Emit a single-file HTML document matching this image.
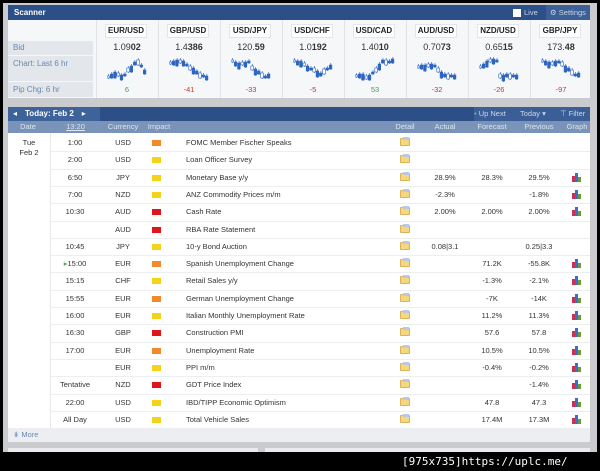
<!DOCTYPE html>
<html><head><meta charset="utf-8"><style>
*{margin:0;padding:0;box-sizing:border-box}
body{width:600px;height:471px;background:#000;font-family:"Liberation Sans","DejaVu Sans",sans-serif;font-size:8px;color:#333;position:relative;overflow:hidden}
.bg{position:absolute;left:3px;top:3px;width:594px;height:449px;background:#c9cbce}
.abs{position:absolute}
.panel{position:absolute;background:#f4f6f9}
.hdr{position:absolute;background:#2b4f86;color:#fff;font-weight:bold}
.c{text-align:center}
</style></head><body>
<div class="bg"></div>
<!-- scanner -->
<div class="panel" style="left:8px;top:5px;width:582px;height:93px;background:#f6f7f9"></div>
<div class="hdr" style="left:8px;top:5px;width:582px;height:15px;font-size:8px;line-height:15px;padding-left:6px">Scanner</div>
<div class="abs" style="left:513px;top:9px;width:8px;height:8px;background:#fff"></div>
<div class="abs" style="left:524px;top:5px;color:#c9d6ea;line-height:15px;font-size:7.5px">Live</div>
<div class="abs" style="left:546px;top:5px;width:44px;height:15px;background:#3c5f95"></div>
<div class="abs" style="left:550px;top:5px;color:#c9d6ea;line-height:15px;font-size:7.5px">⚙ Settings</div>
<div class="abs" style="left:8px;top:20px;width:85px;height:78px;background:#f6f7f9"></div>
<div class="abs" style="left:8px;top:41px;width:85px;height:14px;background:#e3e6ea;color:#6a88b0;line-height:14px;padding-left:5px">Bid</div>
<div class="abs" style="left:8px;top:56px;width:85px;height:25px;background:#e3e6ea;color:#6a88b0;padding:3px 5px">Chart: Last 6 hr</div>
<div class="abs" style="left:8px;top:82px;width:85px;height:15px;background:#e3e6ea;color:#6a88b0;line-height:15px;padding-left:5px">Pip Chg: 6 hr</div>
<div id="scan"></div>
<!-- calendar -->
<div class="panel" style="left:8px;top:107px;width:582px;height:335px;background:#fff"></div>
<div class="hdr" style="left:8px;top:107px;width:582px;height:14px"></div>
<div class="abs" style="left:8px;top:107px;width:92px;height:14px;background:#3e639b;color:#fff;font-weight:bold;line-height:14px;font-size:8px"><span style="margin-left:5px">◂</span><span style="margin-left:8px">Today: Feb 2</span><span style="margin-left:8px">▸</span></div>
<div class="abs" style="left:474px;top:107px;width:116px;height:14px;background:#3a5e95"></div>
<div class="abs" style="left:474px;top:107px;color:#cbd7ea;line-height:14px;font-size:7.5px"><span style="color:#6c6">•</span> Up Next</div>
<div class="abs" style="left:520px;top:107px;color:#cbd7ea;line-height:14px;font-size:7.5px">Today ▾</div>
<div class="abs" style="left:560px;top:107px;color:#cbd7ea;line-height:14px;font-size:7.5px">⊤ Filter</div>
<div class="abs" style="left:8px;top:121px;width:582px;height:12px;background:#7a93b8;color:#dde5f0;line-height:12px;font-size:7.5px"></div>
<div id="cal"></div>
<div class="abs" style="left:8px;top:428px;width:582px;height:14px;background:#eceef1;color:#6a88b0;line-height:14px;padding-left:5px;font-size:7.5px">⇟ More</div>
<div class="abs" style="left:8px;top:448px;width:250px;height:4px;background:#e9ebee"></div>
<div class="abs" style="left:265px;top:448px;width:325px;height:4px;background:#e9ebee"></div>
<div class="abs" style="left:402px;top:452px;color:#fff;font-family:'DejaVu Sans Mono',monospace;font-size:11px;line-height:19px">[975x735]https://uplc.me/</div>
<script>
var pairs=[["EUR/USD","1.09","02","6",1],["GBP/USD","1.4","386","-41",0],["USD/JPY","120.","59","-33",0],["USD/CHF","1.0","192","-5",0],["USD/CAD","1.40","10","53",1],["AUD/USD","0.70","73","-32",0],["NZD/USD","0.65","15","-26",0],["GBP/JPY","173.","48","-97",0]];
var shapes=[[20,18,16,17,19,18,12,10,6,4,9,14],[6,5,4,4,5,8,10,12,15,17,19,20],[4,6,7,6,6,5,10,13,15,17,20,18],[4,5,5,7,10,12,12,15,17,13,12,9],[19,18,18,20,19,16,12,8,4,4,5,3],[10,9,9,8,8,9,12,16,18,18,19,19],[10,8,5,3,3,4,18,19,18,18,19,19],[4,5,6,6,5,5,6,10,12,14,18,17]];
var h="";
pairs.forEach(function(p,i){var x=97+i*62;
h+='<div class="abs" style="left:'+(x-1)+'px;top:20px;width:1px;height:78px;background:#e0e3e7"></div>';
h+='<div class="abs c" style="left:'+(x+8)+'px;top:24px;width:42px;height:14px;background:#fff;border:1px solid #e3e5e8;font-weight:bold;line-height:12px;font-size:8px;color:#222">'+p[0]+'</div>';
h+='<div class="abs c" style="left:'+x+'px;top:42px;width:60px;font-size:9px;color:#333">'+p[1]+'<b>'+p[2]+'</b></div>';
h+='<div class="abs c" style="left:'+x+'px;top:85px;width:60px;font-size:7.5px;color:'+(p[4]?'#4a9e4a':'#c33')+'">'+p[3]+'</div>';
var s='<svg class="abs" style="left:'+(x+10)+'px;top:56px" width="42" height="26">';
shapes[i].forEach(function(v,k){var y=v,hh=2+((k*7)%5);var big=(k%3==0);
s+='<line x1="'+(k*3.3+1.5)+'" y1="'+(y-2)+'" x2="'+(k*3.3+1.5)+'" y2="'+(y+hh+1)+'" stroke="#3a6fc4" stroke-width="0.7"/>';
s+='<rect x="'+(k*3.3)+'" y="'+y+'" width="2.6" height="'+hh+'" fill="'+(big?'#fff':'#2c64c0')+'" stroke="#2c64c0" stroke-width="0.6"/>';});
s+='</svg>';h+=s;});
document.getElementById("scan").innerHTML=h;
var heads=[["Date",8,40],["13:20",58,35],["Currency",103,40],["Impact",144,30],["Detail",388,34],["Actual",428,34],["Forecast",474,36],["Previous",520,38],["Graph",562,30]];
var c="";heads.forEach(function(a){c+='<div class="abs c" style="left:'+a[1]+'px;top:121px;width:'+a[2]+'px;line-height:12px;font-size:7.5px;color:#dde5f0;'+(a[0]=="13:20"?'text-decoration:underline':'')+'">'+a[0]+'</div>';});
var O="#f08a2c",Y="#f5d31a",R="#e0141a";
var rows=[["1:00","USD",O,"FOMC Member Fischer Speaks","","","",0],["2:00","USD",Y,"Loan Officer Survey","","","",0],["6:50","JPY",Y,"Monetary Base y/y","28.9%","28.3%","29.5%",1],["7:00","NZD",Y,"ANZ Commodity Prices m/m","-2.3%","","-1.8%",1],["10:30","AUD",R,"Cash Rate","2.00%","2.00%","2.00%",1],["","AUD",R,"RBA Rate Statement","","","",0],["10:45","JPY",Y,"10-y Bond Auction","0.08|3.1","","0.25|3.3",0],["15:00","EUR",O,"Spanish Unemployment Change","","71.2K","-55.8K",1],["15:15","CHF",Y,"Retail Sales y/y","","-1.3%","-2.1%",1],["15:55","EUR",O,"German Unemployment Change","","-7K","-14K",1],["16:00","EUR",Y,"Italian Monthly Unemployment Rate","","11.2%","11.3%",1],["16:30","GBP",R,"Construction PMI","","57.6","57.8",1],["17:00","EUR",O,"Unemployment Rate","","10.5%","10.5%",1],["","EUR",Y,"PPI m/m","","-0.4%","-0.2%",1],["Tentative","NZD",R,"GDT Price Index","","","-1.4%",1],["22:00","USD",Y,"IBD/TIPP Economic Optimism","","47.8","47.3",1],["All Day","USD",Y,"Total Vehicle Sales","","17.4M","17.3M",1]];
c+='<div class="abs c" style="left:8px;top:138px;width:42px;font-size:7.5px;line-height:10px">Tue<br>Feb 2</div>';
c+='<div class="abs" style="left:50px;top:133px;width:1px;height:295px;background:#e6e8eb"></div>';
rows.forEach(function(r,i){var y=134+i*17.3;
if(i>0)c+='<div class="abs" style="left:51px;top:'+y.toFixed(1)+'px;width:539px;height:1px;background:#eceef0"></div>';
var ty=y+4;
c+='<div class="abs c" style="left:52px;top:'+ty+'px;width:46px;font-size:7.5px">'+(i==7?'<span style="color:#5a5">▸</span>':'')+r[0]+'</div>';
c+='<div class="abs c" style="left:103px;top:'+ty+'px;width:40px;font-size:7.5px">'+r[1]+'</div>';
c+='<div class="abs" style="left:152px;top:'+(y+6)+'px;width:9px;height:6px;background:'+r[2]+'"></div>';
c+='<div class="abs" style="left:186px;top:'+ty+'px;font-size:7.5px;white-space:nowrap">'+r[3]+'</div>';
c+='<div class="abs" style="left:400px;top:'+(y+4)+'px;width:10px;height:8px;background:#f5d780;border:1px solid #d9b25a;border-radius:1px"></div><div class="abs" style="left:403px;top:'+(y+3)+'px;width:6px;height:3px;background:#b8c8e6"></div>';
c+='<div class="abs c" style="left:425px;top:'+ty+'px;width:40px;font-size:7.5px">'+r[4]+'</div>';
c+='<div class="abs c" style="left:472px;top:'+ty+'px;width:40px;font-size:7.5px">'+r[5]+'</div>';
c+='<div class="abs c" style="left:519px;top:'+ty+'px;width:40px;font-size:7.5px">'+r[6]+'</div>';
if(r[7])c+='<svg class="abs" style="left:572px;top:'+(y+4)+'px" width="10" height="9"><rect x="0" y="3" width="3" height="6" fill="#d03050"/><rect x="3" y="0" width="3" height="9" fill="#3a6ec8"/><rect x="6" y="4" width="3" height="5" fill="#6a9a3a"/></svg>';
});
document.getElementById("cal").innerHTML=c;
</script>
</body></html>
